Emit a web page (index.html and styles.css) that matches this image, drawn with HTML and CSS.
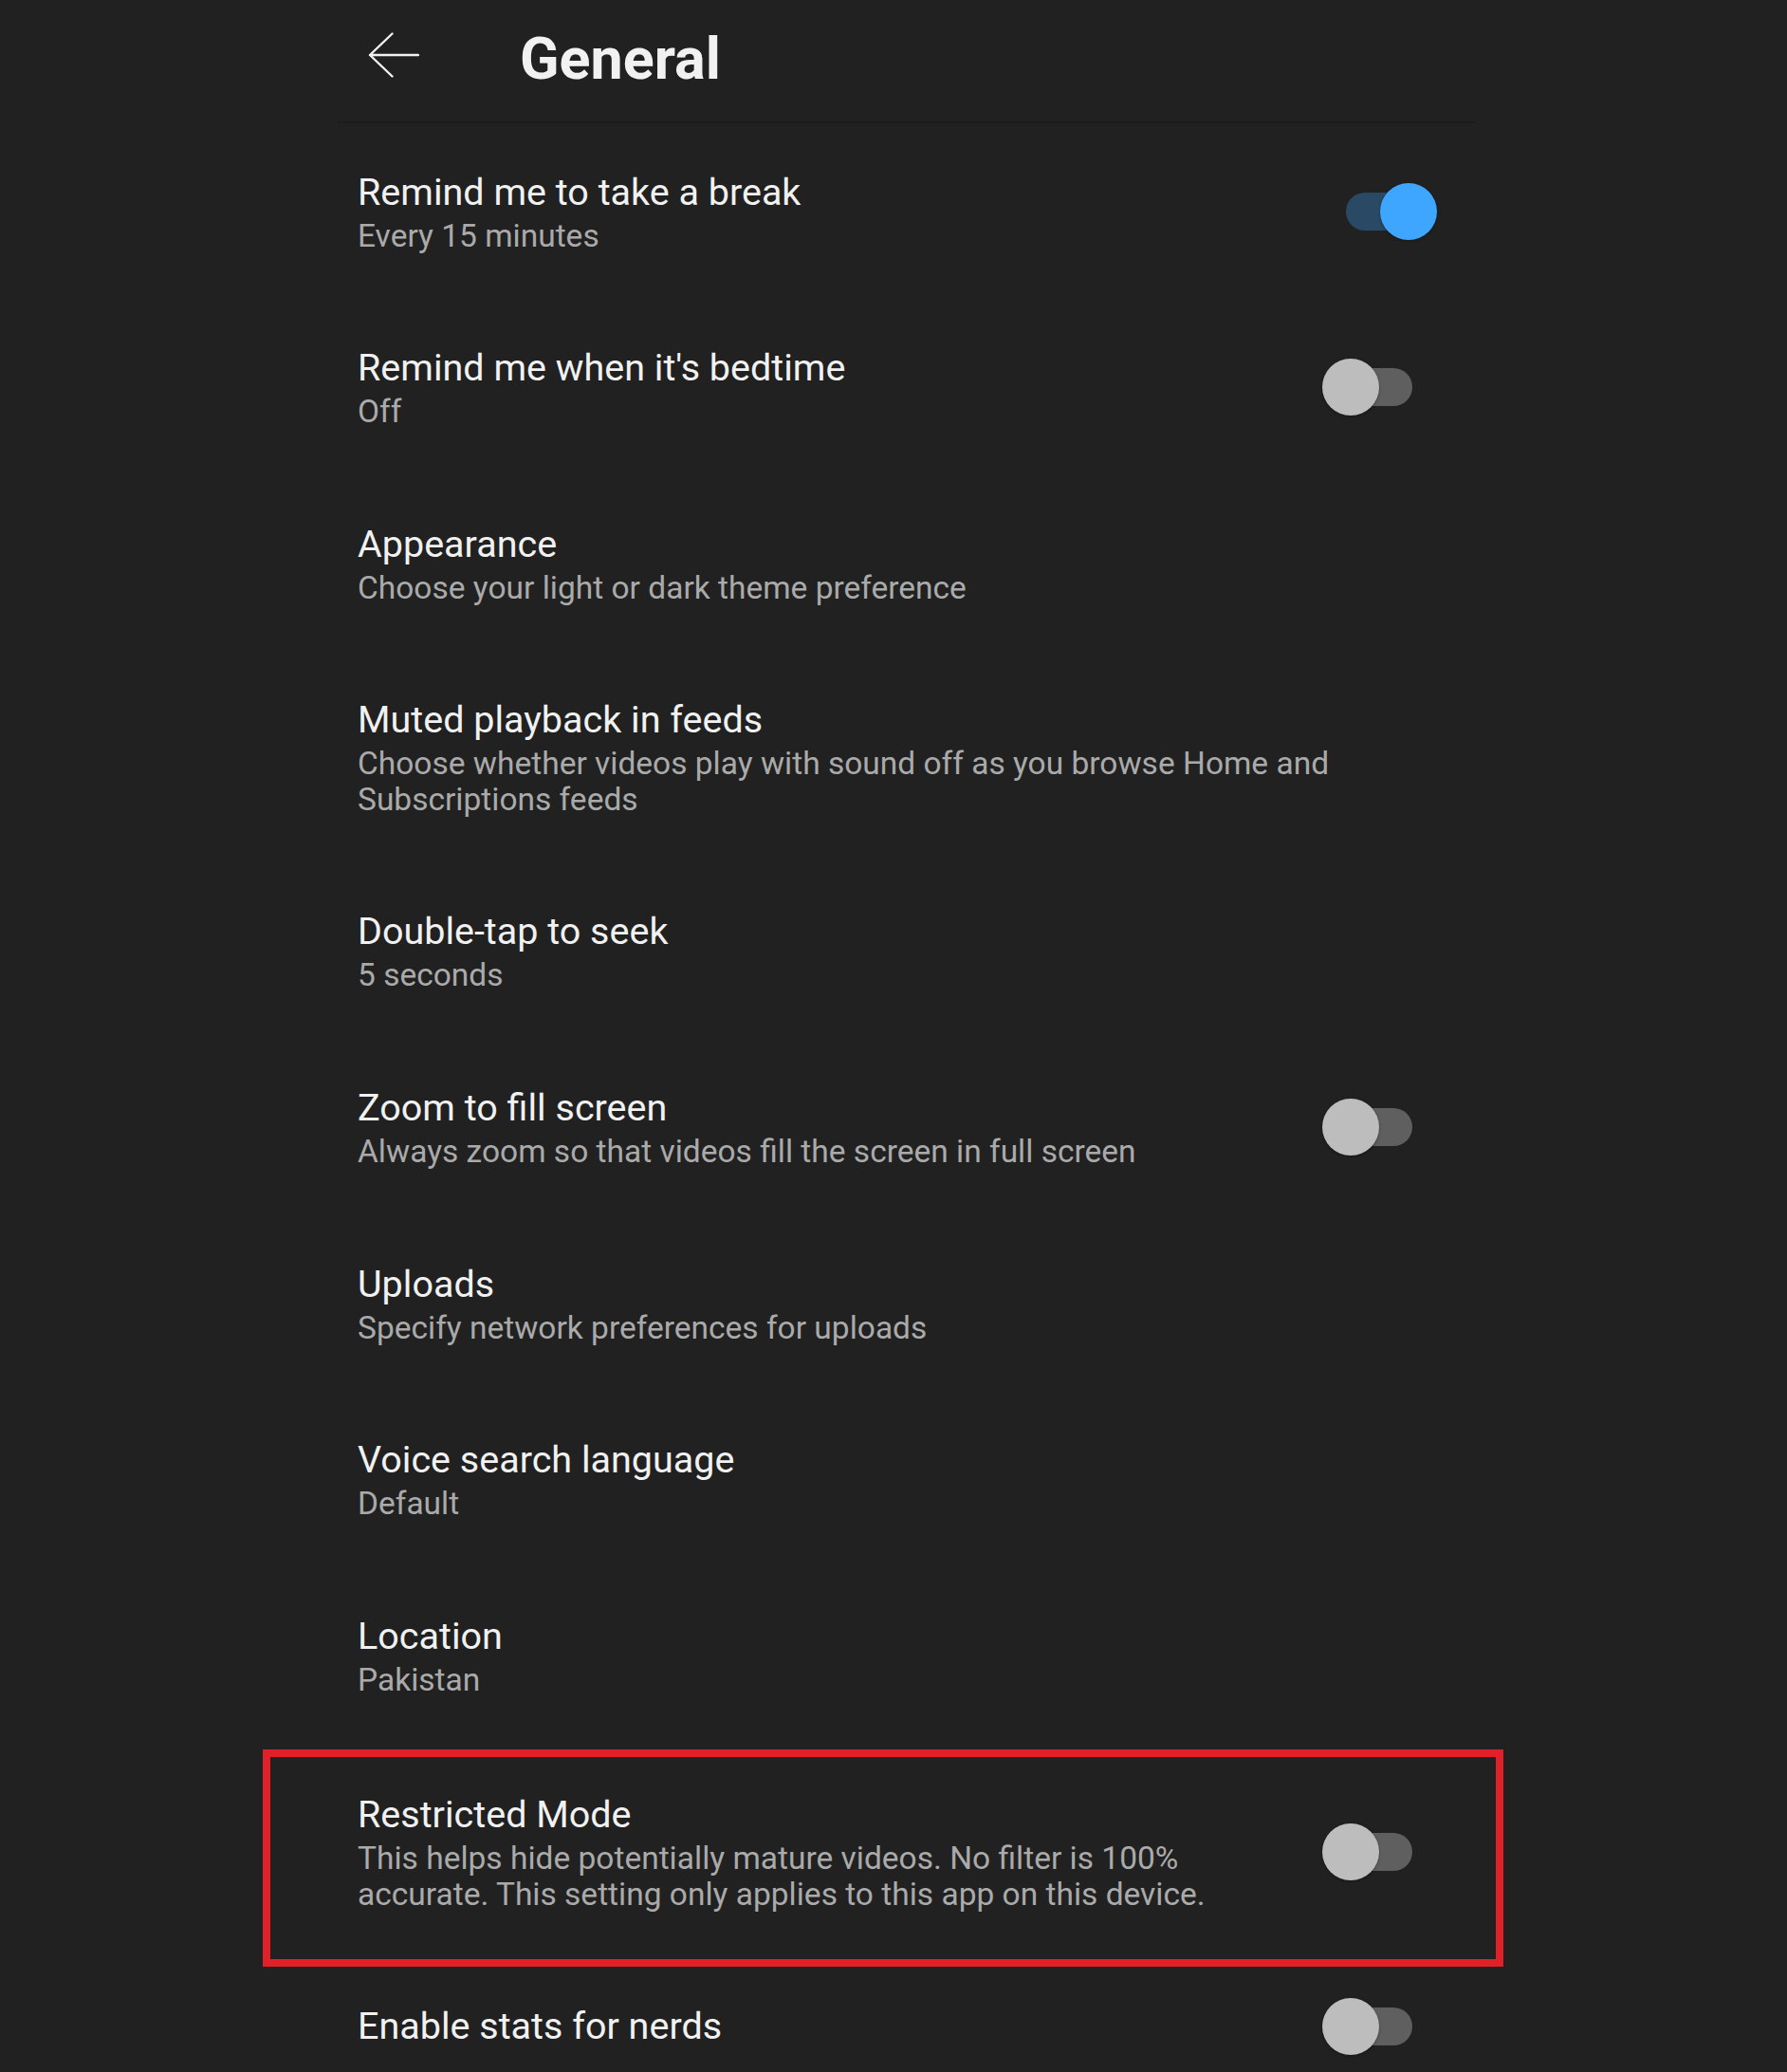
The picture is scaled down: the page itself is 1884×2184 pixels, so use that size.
FILE: index.html
```html
<!DOCTYPE html>
<html lang="en">
<head>
<meta charset="utf-8">
<title>General</title>
<link rel="stylesheet" href="styles.css">
</head>
<body>
<div class="screen">
  <header class="appbar">
    <svg class="back" width="54" height="48" viewBox="0 0 54 48" aria-hidden="true">
      <path d="M2 24 H53 M25.5 1.5 L2 24 L25.5 46.5" fill="none" stroke="#f1f1f1" stroke-width="2.4" stroke-linecap="round" stroke-linejoin="round"/>
    </svg>
    <h1 class="appbar-title">General</h1>
  </header>
  <div class="appbar-sep"></div>

  <div class="list">
    <div class="row">
      <div class="text">
        <div class="title">Remind me to take a break</div>
        <div class="sub">Every 15 minutes</div>
      </div>
      <div class="switch on"><span class="track"></span><span class="knob"></span></div>
    </div>
    <div class="row">
      <div class="text">
        <div class="title">Remind me when it's bedtime</div>
        <div class="sub">Off</div>
      </div>
      <div class="switch"><span class="track"></span><span class="knob"></span></div>
    </div>
    <div class="row">
      <div class="text">
        <div class="title">Appearance</div>
        <div class="sub">Choose your light or dark theme preference</div>
      </div>
    </div>
    <div class="row">
      <div class="text">
        <div class="title">Muted playback in feeds</div>
        <div class="sub">Choose whether videos play with sound off as you browse Home and Subscriptions feeds</div>
      </div>
    </div>
    <div class="row">
      <div class="text">
        <div class="title">Double-tap to seek</div>
        <div class="sub">5 seconds</div>
      </div>
    </div>
    <div class="row">
      <div class="text">
        <div class="title">Zoom to fill screen</div>
        <div class="sub">Always zoom so that videos fill the screen in full screen</div>
      </div>
      <div class="switch"><span class="track"></span><span class="knob"></span></div>
    </div>
    <div class="row">
      <div class="text">
        <div class="title">Uploads</div>
        <div class="sub">Specify network preferences for uploads</div>
      </div>
    </div>
    <div class="row">
      <div class="text">
        <div class="title">Voice search language</div>
        <div class="sub">Default</div>
      </div>
    </div>
    <div class="row">
      <div class="text">
        <div class="title">Location</div>
        <div class="sub">Pakistan</div>
      </div>
    </div>
    <div class="row highlighted">
      <div class="text">
        <div class="title">Restricted Mode</div>
        <div class="sub">This helps hide potentially mature videos. No filter is 100% accurate. This setting only applies to this app on this device.</div>
      </div>
      <div class="switch"><span class="track"></span><span class="knob"></span></div>
      <div class="highlight-box"></div>
    </div>
    <div class="row">
      <div class="text">
        <div class="title">Enable stats for nerds</div>
      </div>
      <div class="switch"><span class="track"></span><span class="knob"></span></div>
    </div>
  </div>
</div>
</body>
</html>
```

FILE: styles.css
```css
html {
  overflow: hidden;
  background: #212121;
}

body {
  margin: 0;
  background: #212121;
  font-family: Roboto, "Liberation Sans", Arial, sans-serif;
  color: #f1f1f1;
}

.screen {
  width: 1200px;
  margin-left: 356px;
}

.appbar {
  height: 124px;
  padding-bottom: 4px;
  padding-left: 32px;
  display: flex;
  align-items: center;
}

.back {
  display: block;
  flex-shrink: 0;
  margin-bottom: 8px;
}

.appbar-title {
  margin: 0 0 0 106px;
  font-size: 61px;
  line-height: 61px;
  font-weight: 700;
  color: #f1f1f1;
}

.appbar-sep {
  height: 2px;
  background: #1c1c1c;
  border-radius: 0 2px 2px 0;
}

.list {
  display: flex;
  flex-direction: column;
}

.row {
  position: relative;
  display: flex;
  align-items: center;
  gap: 40px;
  padding: 48.6px 41px 48.6px 21px;
}

.row.highlighted {
  padding-top: 51.6px;
  padding-bottom: 42.6px;
}

.text {
  flex: 1;
  min-width: 0;
}

.title {
  font-size: 39.5px;
  line-height: 48px;
  color: #f1f1f1;
  white-space: nowrap;
}

.sub {
  margin-top: 3px;
  font-size: 33.5px;
  line-height: 37.4px;
  color: #aaaaaa;
}

.switch {
  position: relative;
  width: 121px;
  height: 60px;
  flex-shrink: 0;
}

.switch .track {
  position: absolute;
  left: 25px;
  top: 10px;
  width: 70px;
  height: 40px;
  border-radius: 20px;
  background: #5f5f5f;
}

.switch .knob {
  position: absolute;
  left: 0;
  top: 0;
  width: 60px;
  height: 60px;
  border-radius: 50%;
  background: #bdbdbd;
  box-shadow: 0 1px 3px rgba(0, 0, 0, 0.35);
}

.switch.on .track {
  background: #2a4964;
}

.switch.on .knob {
  left: 61px;
  background: #3ea6ff;
}

.highlight-box {
  position: absolute;
  left: -79px;
  right: -29px;
  top: 6px;
  bottom: -15px;
  border: 8px solid #e2202a;
  pointer-events: none;
}
```
